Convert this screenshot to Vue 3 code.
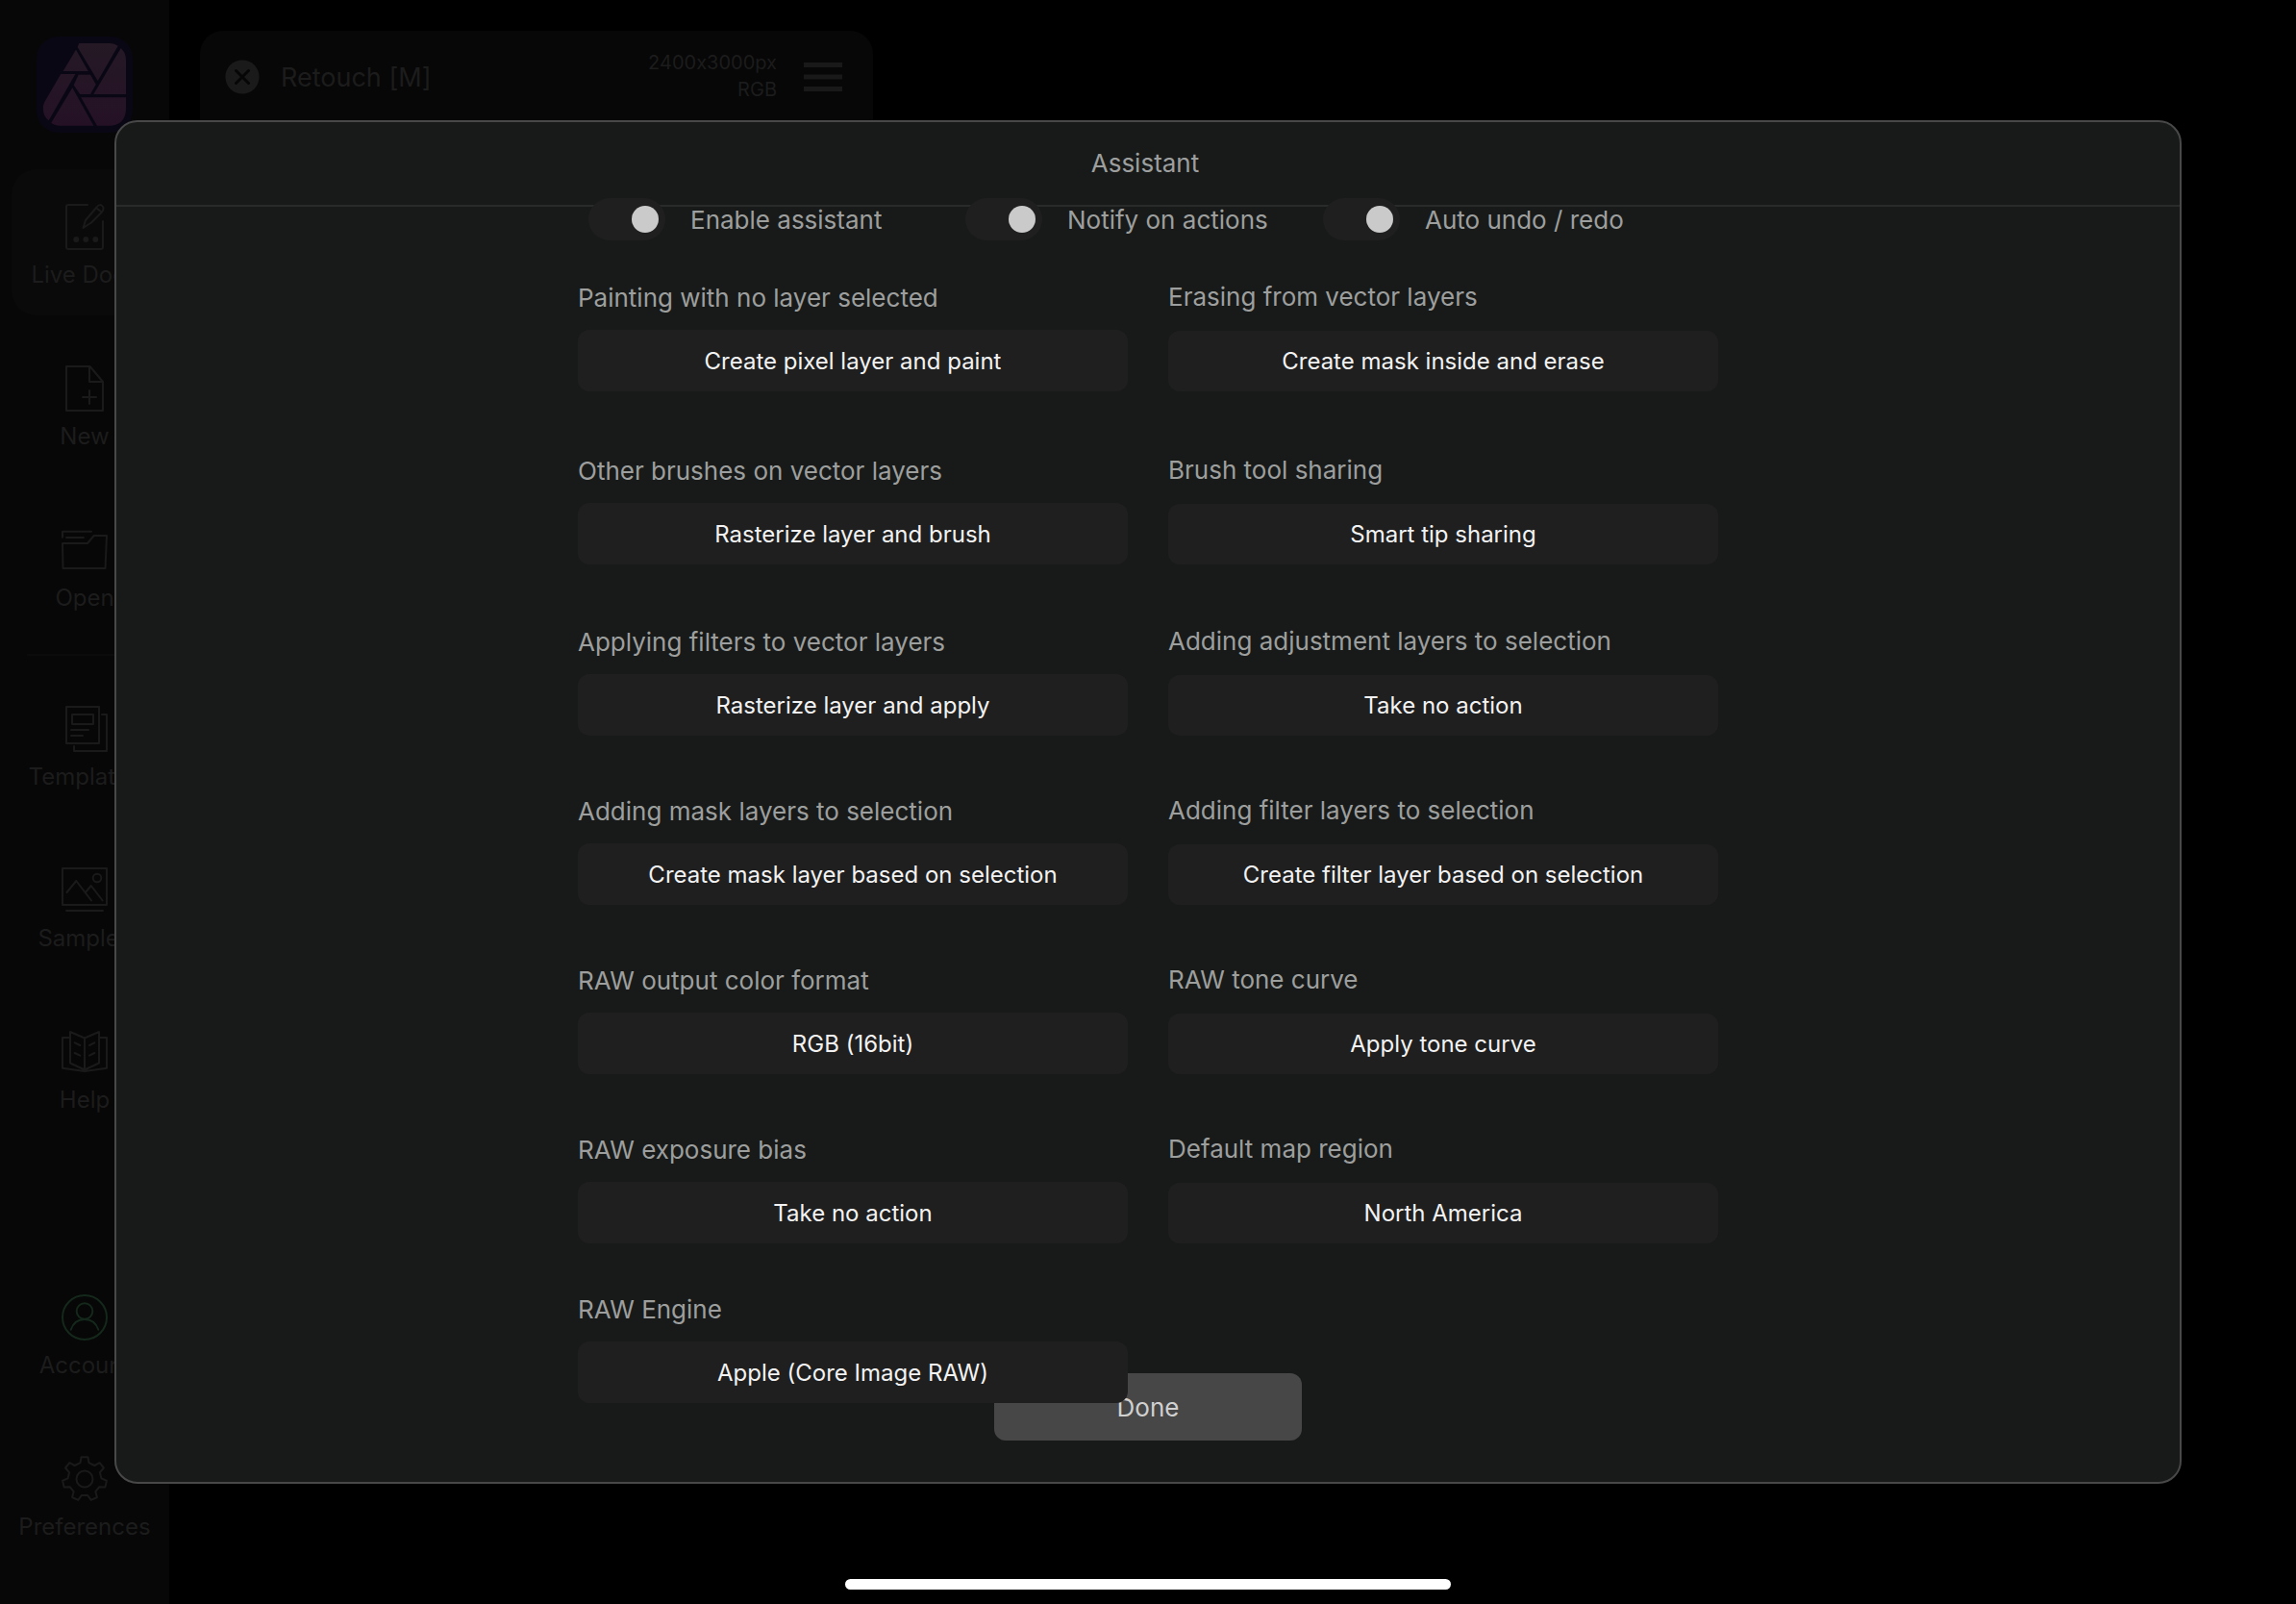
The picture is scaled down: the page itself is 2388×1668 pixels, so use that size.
<template>
  <div class="app">
    <!-- Sidebar -->
    <nav class="sidebar">
      <svg class="logo" viewBox="0 0 100 100" aria-hidden="true">
        <defs>
          <linearGradient id="logoFill" x1="0" y1="0" x2="0" y2="1">
            <stop offset="0" stop-color="#251925" />
            <stop offset="1" stop-color="#251126" />
          </linearGradient>
        </defs>
        <rect width="100" height="100" rx="23" fill="#0a0714" />
        <path
          fill="url(#logoFill)"
          d="M44.3 7H76Q81 7 84.7 9.7L63.7 46L42.7 11Z
             M87.7 12.3Q93 17 93 25V60H59.3Z
             M41 13.7L53.7 36H27.7Z
             M25.3 39H40.3L12.7 87.3Q7 83 7 76Q6.6 71 8.4 68Z
             M43.7 39.7H56L61.7 49.7L56 60H45.3L38.7 50.5Z
             M37.3 53.3L59.3 92.7H25Q19 92.7 15.3 89.7Z
             M46.3 63.3H93V74Q93 92.7 75 92.7H63Z"
        />
      </svg>

      <template v-for="item in navItems" :key="item.name">
        <hr v-if="item.divider" class="nav-divider">
        <button
          type="button"
          class="nav-item"
          :class="{ active: activeNav === item.name, 'push-down': item.name === 'Account' }"
          @click="activeNav = item.name"
        >
          <svg class="nav-icon" :class="{ green: item.name === 'Account' }" viewBox="0 0 48 48" aria-hidden="true">
            <path :d="item.path" />
            <template v-if="item.name === 'Live Docs'">
              <circle class="dot" cx="15.3" cy="37" r="3" />
              <circle class="dot" cx="25.3" cy="37" r="3" />
              <circle class="dot" cx="35.3" cy="37" r="3" />
            </template>
            <circle v-for="(c, i) in item.circles" :key="i" :cx="c[0]" :cy="c[1]" :r="c[2]" />
          </svg>
          <span>{{ item.name }}</span>
        </button>
      </template>
    </nav>

    <!-- Open documents -->
    <main class="workspace">
      <article class="doc-card">
        <header class="doc-header">
          <button type="button" class="icon-btn" aria-label="Close document">
            <svg width="36" height="36" viewBox="0 0 36 36">
              <circle cx="18" cy="18" r="17.6" fill="#1a1a1a" />
              <path d="M11.5 11.5L24.5 24.5M24.5 11.5L11.5 24.5" stroke="#060606" stroke-width="3" stroke-linecap="round" />
            </svg>
          </button>
          <h2 class="doc-name">Retouch [M]</h2>
          <div class="doc-meta">
            <div>2400x3000px</div>
            <div>RGB</div>
          </div>
          <button type="button" class="icon-btn" aria-label="Document menu">
            <svg width="40" height="30" viewBox="0 0 40 30">
              <path d="M0 2.5H40M0 15H40M0 27.5H40" stroke="#191919" stroke-width="5" />
            </svg>
          </button>
        </header>
      </article>
    </main>

    <!-- Assistant dialog -->
    <div class="overlay">
      <section class="dialog" role="dialog" aria-labelledby="dialog-title">
        <header class="dialog-header">
          <h1 id="dialog-title">Assistant</h1>
        </header>

        <div class="dialog-body">
          <div class="toggles">
            <label v-for="toggle in toggles" :key="toggle.label" class="toggle">
              <input v-model="toggle.on" type="checkbox" class="switch">
              <span>{{ toggle.label }}</span>
            </label>
          </div>

          <div class="settings">
            <div v-for="(field, index) in fields" :key="field.label" class="field">
              <label :for="`field-${index}`">{{ field.label }}</label>
              <select :id="`field-${index}`" v-model="field.value">
                <option :value="field.value">{{ field.value }}</option>
              </select>
            </div>
          </div>
        </div>

        <footer class="dialog-footer">
          <button type="button" class="done-btn">Done</button>
        </footer>
      </section>
    </div>

    <div class="home-indicator"></div>
  </div>
</template>

<script setup>
import { ref } from 'vue'

const activeNav = ref('Live Docs')

// Seven-toothed gear outline around 24,24
const gearPath = () => {
  const points = []
  for (let i = 0; i < 7; i++) {
    const angle = (i * 360) / 7 - 90
    for (const [offset, radius] of [[-15, 17.4], [-8.5, 23], [8.5, 23], [15, 17.4]]) {
      const rad = ((angle + offset) * Math.PI) / 180
      points.push(`${(24 + radius * Math.cos(rad)).toFixed(2)} ${(24 + radius * Math.sin(rad)).toFixed(2)}`)
    }
  }
  return `M${points.join('L')}Z`
}

const navItems = [
  {
    name: 'Live Docs',
    path: 'M27 1H7Q5 1 5 3V45Q5 47 7 47H41Q43 47 43 45V18M22.5 25L25 17L36.5 3.5Q40 -1 43 3Q44.5 6 41.5 9L31 19.5ZM36 4L41.5 8.5'
  },
  {
    name: 'New',
    path: 'M5 1H29.5L43 17V47H5ZM29 1V17H43M29 26V40M22 33H36'
  },
  {
    name: 'Open',
    path: 'M1 10.7V4.7H31M5 11H23M1 17H27L33.7 9H47L45.5 43H1.5Z'
  },
  {
    name: 'Templates',
    divider: true,
    path: 'M5 1H39V39H5ZM11 9H33V19H11ZM10 25H28M10 31H22M42 9H47V47H13V42'
  },
  {
    name: 'Samples',
    path: 'M1 1H47V39H1ZM5.5 26L15.3 14L31 34.5M25 26L30.7 19L42.7 34.5M5 45H43',
    circles: [[37, 11, 4.3]]
  },
  {
    name: 'Help',
    path: 'M24 9.5V42.5L9 35.5V3L24 9.5L39 3V35.5L24 42.5M9 9H1V40.7L24 44L47 40.7V9H39M13.7 14.3L19.3 17M13.7 25L19.3 27.7M29 17L34.3 14.3M29 27.7L34.3 25'
  },
  {
    name: 'Account',
    path: 'M9.7 36.7C12 30 17.5 26 24 26S36 30 38.3 36.7',
    circles: [[24, 24, 23], [24, 17.5, 8.3]]
  },
  {
    name: 'Preferences',
    path: gearPath(),
    circles: [[24, 24, 8.5]]
  }
]

const toggles = ref([
  { label: 'Enable assistant', on: true },
  { label: 'Notify on actions', on: true },
  { label: 'Auto undo / redo', on: true }
])

const fields = ref([
  { label: 'Painting with no layer selected', value: 'Create pixel layer and paint' },
  { label: 'Erasing from vector layers', value: 'Create mask inside and erase' },
  { label: 'Other brushes on vector layers', value: 'Rasterize layer and brush' },
  { label: 'Brush tool sharing', value: 'Smart tip sharing' },
  { label: 'Applying filters to vector layers', value: 'Rasterize layer and apply' },
  { label: 'Adding adjustment layers to selection', value: 'Take no action' },
  { label: 'Adding mask layers to selection', value: 'Create mask layer based on selection' },
  { label: 'Adding filter layers to selection', value: 'Create filter layer based on selection' },
  { label: 'RAW output color format', value: 'RGB (16bit)' },
  { label: 'RAW tone curve', value: 'Apply tone curve' },
  { label: 'RAW exposure bias', value: 'Take no action' },
  { label: 'Default map region', value: 'North America' },
  { label: 'RAW Engine', value: 'Apple (Core Image RAW)' }
])
</script>

<style>
body {
  background: #000;
}
</style>

<style scoped>
.app {
  position: relative;
  display: flex;
  min-height: 100vh;
  background: #000;
  font-family: Inter, "Liberation Sans", sans-serif;
  font-size: 24px;
  /* keeps the x in pixel sizes a plain letter */
  font-feature-settings: "calt" 0;
}

.app * {
  box-sizing: border-box;
}

button,
select {
  border: 0;
  font: inherit;
  cursor: pointer;
}

h1,
h2 {
  margin: 0;
  font-weight: 400;
}

/* Sidebar */
.sidebar {
  display: flex;
  flex-direction: column;
  gap: 16px;
  width: 176px;
  flex-shrink: 0;
  padding: 38px 12px;
  background: #070707;
}

.logo {
  width: 100px;
  height: 100px;
  margin: 0 auto 22px;
}

.nav-item {
  display: flex;
  flex-direction: column;
  align-items: center;
  gap: 10px;
  height: 152px;
  padding: 36px 0 0;
  border-radius: 26px;
  background: transparent;
  color: #1c1c1c;
  line-height: 32px;
  white-space: nowrap;
}

.nav-item.active {
  background: #0a0a0a;
}

.nav-item.push-down {
  margin-top: auto;
}

.nav-icon {
  width: 48px;
  height: 48px;
  overflow: visible;
  fill: none;
  stroke: #1a1a1a;
  stroke-width: 2;
  stroke-linejoin: round;
  stroke-linecap: round;
}

.nav-icon.green {
  stroke: #14281b;
}

.dot {
  fill: #1a1a1a;
  stroke: none;
}

.nav-divider {
  width: 120px;
  height: 2px;
  margin: 0 auto;
  border: 0;
  background: #0b0b0b;
}

/* Workspace */
.workspace {
  flex: 1;
  padding: 32px;
}

.doc-card {
  width: 700px;
  max-width: 100%;
  min-height: 400px;
  border-radius: 24px;
  background: #070707;
}

.doc-header {
  display: flex;
  align-items: center;
  height: 96px;
  padding: 0 32px 0 26px;
  color: #1c1c1c;
}

.icon-btn {
  display: flex;
  padding: 0;
  background: transparent;
}

.doc-name {
  flex: 1;
  margin-left: 22px;
  font-size: 27px;
}

.doc-meta {
  margin-right: 28px;
  padding-bottom: 3px;
  font-size: 20px;
  line-height: 28px;
  text-align: right;
}

/* Dialog */
.overlay {
  position: absolute;
  inset: 0;
  display: flex;
  padding: 125px 119px;
}

.dialog {
  display: flex;
  flex-direction: column;
  flex: 1;
  border: 2px solid #484848;
  border-radius: 24px;
  background: #181a19;
  color: #9d9f9e;
}

.dialog-header {
  display: flex;
  align-items: center;
  justify-content: center;
  height: 88px;
  padding-right: 6px;
  border-bottom: 2px solid #292b2a;
}

.dialog-header h1 {
  font-size: 26px;
  line-height: 32px;
}

/* The settings sit above both the header line and the footer */
.dialog-body {
  position: relative;
  z-index: 1;
  flex: 1 1 0;
  min-height: 0;
  width: 1186px;
  max-width: 100%;
  margin: -9px auto 0;
  font-size: 26px;
}

.toggles {
  display: grid;
  grid-template-columns: 392px 372px auto;
  padding-left: 11px;
  margin-bottom: 43px;
}

.toggle {
  display: flex;
  align-items: center;
  gap: 26px;
  height: 44px;
  cursor: pointer;
}

.switch {
  appearance: none;
  display: flex;
  align-items: center;
  width: 80px;
  height: 44px;
  margin: 0;
  padding: 0 7px;
  border-radius: 22px;
  background: #1f1f1f;
  cursor: pointer;
}

.switch::before {
  content: "";
  width: 28px;
  height: 28px;
  border-radius: 50%;
  background: #8a8a8a;
}

.switch:checked::before {
  margin-left: auto;
  background: #cacaca;
}

.settings {
  display: grid;
  grid-template-columns: 1fr 1fr;
  grid-template-rows: 180px 178px repeat(3, 176px) 166px 114px;
  column-gap: 42px;
}

.field {
  display: flex;
  flex-direction: column;
  justify-content: flex-end;
  height: 114px;
}

.field label {
  padding-bottom: 17px;
  line-height: 32px;
}

.field:nth-child(even) label {
  padding-bottom: 19px;
}

.field select {
  appearance: none;
  width: 100%;
  height: 64px;
  padding: 0 16px;
  border-radius: 12px;
  background: #1f1f1f;
  color: #f2f2f2;
  font-size: 24px;
  text-align: center;
  text-align-last: center;
}

.dialog-footer {
  display: flex;
  justify-content: center;
  padding-bottom: 43px;
}

.done-btn {
  width: 320px;
  height: 70px;
  border-radius: 12px;
  background: #474747;
  color: #d0d0d0;
  font-size: 26px;
}

.home-indicator {
  position: absolute;
  bottom: 15px;
  left: 50%;
  width: 630px;
  height: 11px;
  margin-left: -315px;
  border-radius: 6px;
  background: #fff;
}
</style>
